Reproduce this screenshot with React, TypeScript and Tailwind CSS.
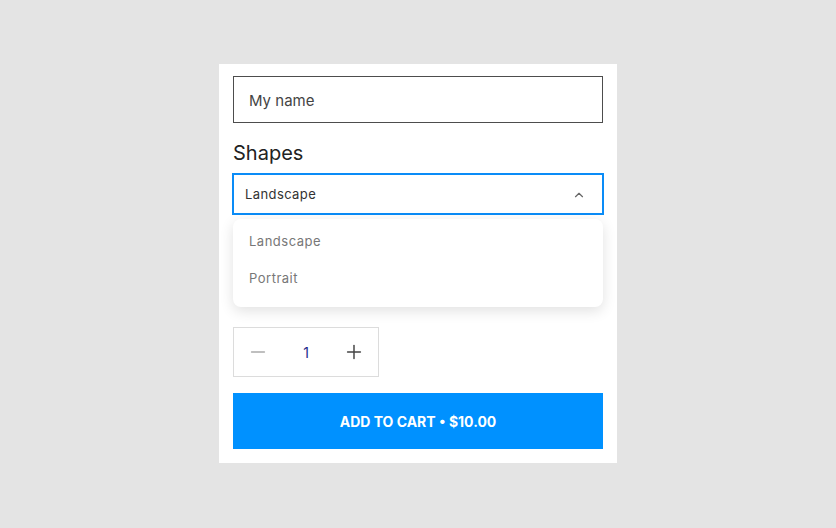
import { ChevronUp, Minus, Plus } from 'lucide-react'

const font = { fontFamily: 'Inter, "Noto Sans", sans-serif' }

const ProductForm = () => {
  return (
    <div className="min-h-screen w-full bg-[#e4e4e4] flex justify-center pt-16" style={font}>
      <div className="w-[398px] h-[399px] bg-white overflow-hidden">
        <div className="px-[14px] pt-[12px] flex flex-col">
          <div className="h-[47px] border border-[#4d4d4d] flex items-center px-[15px] pt-[3px] text-[15px] text-[#444]">
            My name
          </div>
          <div className="mt-[18px] text-[20px] leading-[24px] text-[#222] font-normal">Shapes</div>
          <div className="relative mt-[8px]">
            <div className="-mx-px h-[42px] border-2 border-[#0a8cf7] flex items-center justify-between pl-[11px] pr-[16px] pt-[1px] text-[13px] tracking-[0.4px] text-[#333]">
              <span>Landscape</span>
              <ChevronUp className="w-[14px] h-[14px] text-[#666]" strokeWidth={2} />
            </div>
            <div className="absolute left-0 right-0 top-[46px] h-[88px] bg-white rounded-lg shadow-[0_4px_14px_rgba(0,0,0,0.12)] flex flex-col pt-[13px] px-[16px] text-[13px] tracking-[0.5px] text-[#777]">
              <div className="h-[37px] leading-[18px]">Landscape</div>
              <div className="leading-[18px]">Portrait</div>
            </div>
          </div>
          <div className="mt-[112px] w-[146px] h-[50px] border border-[#dcdcdc] flex items-center justify-between px-[13px]">
            <Minus className="w-[22px] h-[22px] text-[#aaa]" strokeWidth={1.6} />
            <span className="text-[14px] text-[#1e2a8a]">1</span>
            <Plus className="w-[22px] h-[22px] text-[#444]" strokeWidth={1.6} />
          </div>
          <button className="mt-[16px] h-[56px] w-full bg-[#0091ff] text-white font-bold text-[14px] flex items-center justify-center">
            ADD TO CART • $10.00
          </button>
        </div>
      </div>
    </div>
  )
}

export default function App() {
  return <ProductForm />
}
